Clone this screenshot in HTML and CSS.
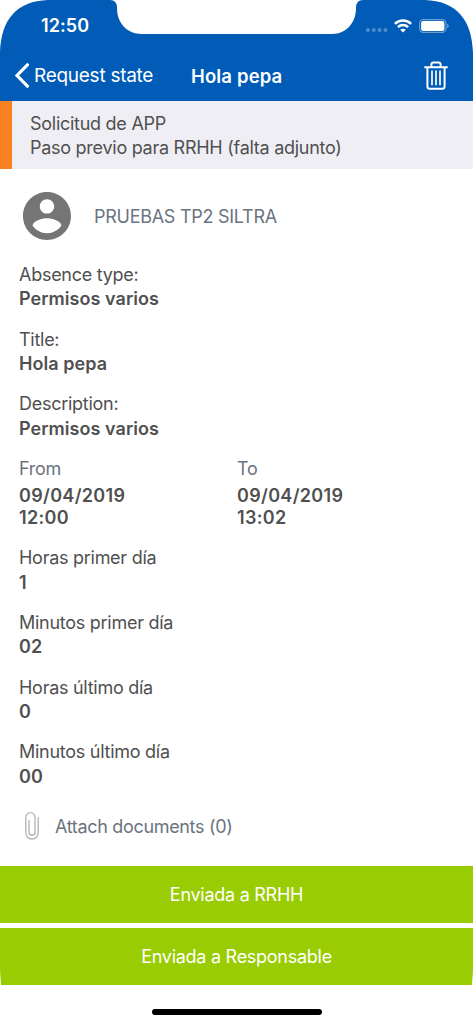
FILE: index.html
```html
<!DOCTYPE html>
<html lang="en">
<head>
<meta charset="utf-8">
<meta name="viewport" content="width=device-width, initial-scale=1">
<title>Hola pepa</title>
<link rel="stylesheet" href="styles.css">
</head>
<body>
<div class="screen">
  <header class="header">
    <div class="status">
      <span class="time">12:50</span>
      <div class="indicators">
        <svg class="signal" width="22" height="4" viewBox="0 0 22 4"><g fill="#4c8ccd"><circle cx="2" cy="2" r="2"/><circle cx="7.8" cy="2" r="2"/><circle cx="13.6" cy="2" r="2"/><circle cx="19.4" cy="2" r="2"/></g></svg>
        <svg class="wifi" width="18" height="14" viewBox="0 0 18 14"><g fill="none" stroke="#fff" stroke-width="2.5"><path d="M.9 4.9C5.4.5 12.6.5 17.1 4.9"/><path d="M3.9 8.1c2.9-2.7 7.3-2.7 10.2 0"/></g><path fill="#fff" d="M6.2 10.7c1.6-1.4 4-1.4 5.6 0L9 13.6z"/></svg>
        <svg class="battery" width="30" height="14" viewBox="0 0 30 14"><rect x=".6" y=".6" width="26.3" height="12.8" rx="3.6" fill="none" stroke="#6ba0d7" stroke-width="1.1"/><rect x="2.1" y="2" width="23.300" height="10" rx="2" fill="#fff"/><path d="M28.2 4.7c2 .7 2 3.9 0 4.6z" fill="#6ba0d7"/></svg>
      </div>
    </div>
    <nav class="nav">
      <a class="back">
        <svg width="14" height="25" viewBox="0 0 14 25"><path d="M12.4 1.8 2 12.5l10.4 10.7" fill="none" stroke="#fff" stroke-width="3.2" stroke-linecap="round"/></svg>
        <span class="back-label">Request state</span>
      </a>
      <h1 class="title">Hola pepa</h1>
      <svg class="trash" width="24" height="29" viewBox="0 0 24 29"><g fill="none" stroke="#fff"><path d="M.3 6.2h23.4" stroke-width="2"/><path d="M7.4 6V3.4Q7.4 1.5 9.3 1.5h5.4q1.9 0 1.9 1.9V6" stroke-width="2"/><path d="M3.4 6.2v19.3q0 2.3 2.3 2.3h12.6q2.3 0 2.3-2.3V6.2" stroke-width="2"/><path d="M8 9.4v14.8M12 9.4v14.8M16 9.4v14.8" stroke-width="1.7"/></g></svg>
    </nav>
  </header>

  <section class="banner">
    <div class="banner-kind">Solicitud de APP</div>
    <div class="banner-step">Paso previo para RRHH (falta adjunto)</div>
  </section>

  <main class="content">
    <section class="person">
      <svg width="48" height="48" viewBox="2 2 20 20"><path fill="#757575" d="M12 2C6.48 2 2 6.48 2 12s4.480 10 10 10 10-4.480 10-10S17.520 2 12 2zm0 3c1.660 0 3 1.340 3 3s-1.340 3-3 3-3-1.340-3-3 1.340-3 3-3zm0 14.200c-2.500 0-4.710-1.280-6-3.220.030-1.990 4-3.080 6-3.080 1.990 0 5.970 1.090 6 3.080-1.290 1.940-3.500 3.220-6 3.220z"/></svg>
      <span class="person-name">PRUEBAS TP2 SILTRA</span>
    </section>

    <dl class="fields">
      <div><dt>Absence type:</dt><dd>Permisos varios</dd></div>
      <div><dt>Title:</dt><dd>Hola pepa</dd></div>
      <div><dt>Description:</dt><dd>Permisos varios</dd></div>
      <div class="range">
        <div><dt>From</dt><dd>09/04/2019<br>12:00</dd></div>
        <div><dt>To</dt><dd>09/04/2019<br>13:02</dd></div>
      </div>
      <div><dt>Horas primer día</dt><dd>1</dd></div>
      <div><dt>Minutos primer día</dt><dd>02</dd></div>
      <div><dt>Horas último día</dt><dd>0</dd></div>
      <div><dt>Minutos último día</dt><dd>00</dd></div>
    </dl>

    <div class="attach">
      <svg width="14" height="28" viewBox="0 0 14 28"><path d="M13.200 5v15.600c0 8.600-12.400 8.600-12.400 0V5.400c0-6.200 9.200-6.200 9.200 0v14.800c0 4-6 4-6 0V8.200" fill="none" stroke="#aaa" stroke-width="1.200"/></svg>
      <span class="attach-label">Attach documents (0)</span>
    </div>
  </main>

  <footer class="actions">
    <button class="action rrhh">Enviada a RRHH</button>
    <button class="action responsable">Enviada a Responsable</button>
    <div class="home"></div>
  </footer>
</div>
</body>
</html>
```
FILE: styles.css
```css
* { box-sizing: border-box; }
body { margin: 0; background: #fff; }
.screen {
  width: 473px;
  height: 1024px;
  overflow: hidden;
  display: flex;
  flex-direction: column;
  font-family: Inter, "Liberation Sans", sans-serif;
  font-size: 18px;
  line-height: 24px;
  letter-spacing: -.27px;
  color: #505050;
  white-space: nowrap;
}
.header {
  height: 100.6px;
  flex: none;
  background: #005cb7;
  color: #fff;
  clip-path: path("M0 101V53C1 19 17 1 48 0H110Q117 0 117 8C117 23 127 34 142 34H332C346 34 356 23 356 8Q356 0 363 0H425C456 1 472 19 473 53V101Z");
}
.status {
  height: 51px;
  padding: 0 24px 0 41px;
  display: flex;
  justify-content: space-between;
  align-items: center;
}
.time { font-weight: 600; font-size: 18px; letter-spacing: .1px; padding-top: 1px; }
.indicators { display: flex; align-items: center; }
.signal { margin: 9px 6px 0 0; }
.wifi { margin-right: 7px; }
.nav {
  height: 49px;
  padding: 0 25px 0 15px;
  display: grid;
  grid-template-columns: 176px 1fr 24px;
  align-items: center;
}
.back { display: flex; align-items: center; gap: 5px; }
.title { margin: 0; font-size: 18.5px; line-height: 24px; font-weight: 600; letter-spacing: .15px; }
.back-label { font-size: 19px; }
.trash { margin-top: -1px; }
.banner {
  height: 68.4px;
  flex: none;
  padding: 11px 0 0 18px;
  border-left: 12px solid #f98121;
  background: #efeef4;
  line-height: 24.4px;
}
.content { height: 697px; flex: none; padding: 23px 19px 0; }
.person { height: 48px; padding-left: 4px; display: flex; align-items: center; gap: 23px; color: #6b7380; }
.person-name { padding-top: 2px; }
.fields {
  margin: 23px 0 0;
  display: flex;
  flex-direction: column;
  gap: 16px;
  line-height: 24.35px;
}
dt, dd { margin: 0; }
dd { font-weight: 600; letter-spacing: .05px; }
.range { display: grid; grid-template-columns: 218px 1fr; }
.range dt { color: #6b7380; }
.range dd { line-height: 22px; padding: 4px 0 1px; letter-spacing: .32px; }
.attach { margin: 23px 0 0 6px; height: 28px; display: flex; align-items: center; gap: 16px; color: #6b7380; letter-spacing: -.33px; }
.attach-label { padding-top: 1px; }
.actions { display: flex; flex-direction: column; gap: 5px; align-items: center; }
.action {
  width: 100%;
  height: 57px;
  padding: 2px 0 0;
  border: 0;
  background: #99cc02;
  color: #fff;
  font: inherit;
  letter-spacing: inherit;
}
.responsable { clip-path: path("M0 0H473V42L472 57H1L0 42Z"); }
.home { width: 170px; height: 6px; margin-top: 19px; border-radius: 3px; background: #000; }
```
